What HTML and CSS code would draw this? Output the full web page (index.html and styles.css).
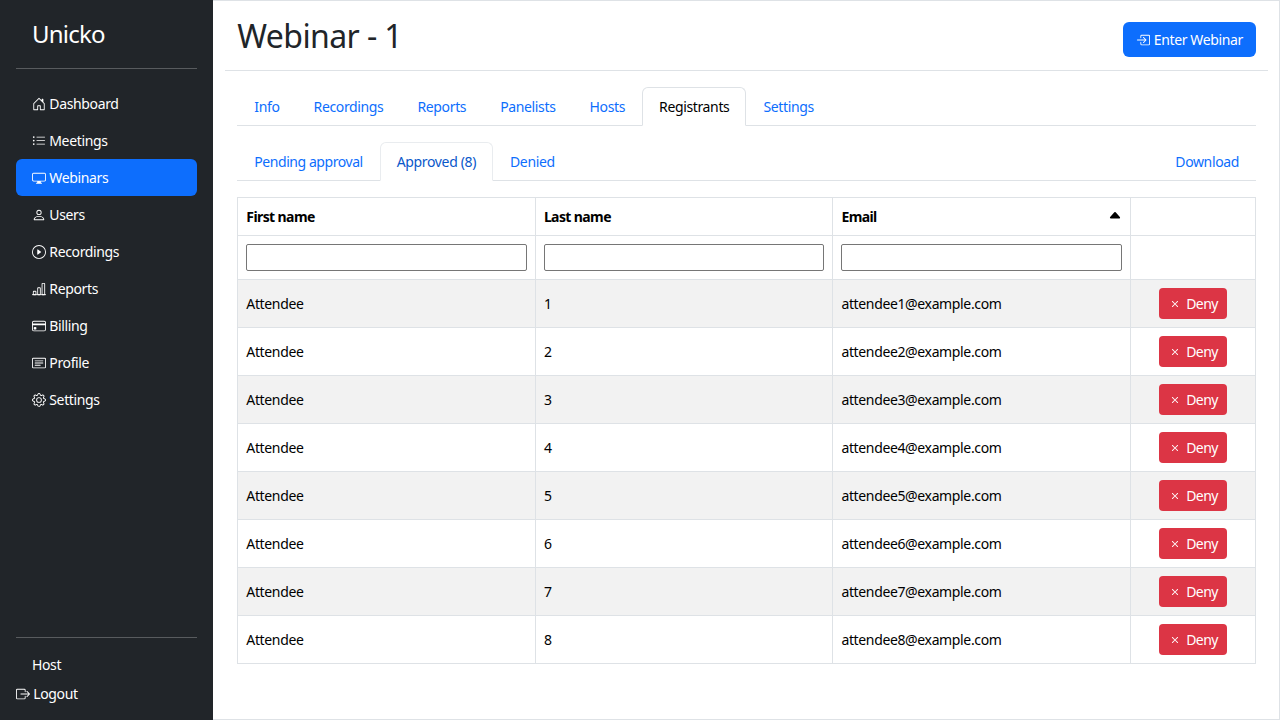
FILE: index.html
```html
<!DOCTYPE html>
<html lang="en">

<head>
    <meta charset="utf-8" />
    <title>Unicko</title>
    <meta name="viewport" content="width=device-width, initial-scale=1">
    <link rel="stylesheet" href="styles.css">
</head>

<body>
    <aside class="sidebar">
        <a class="brand" href="#">Unicko</a>
        <hr>
        <ul class="menu">
            <li><a href="#"><svg class="icon" viewBox="0 0 16 16"><path d="M8.354 1.146a.5.5 0 0 0-.708 0l-6 6A.5.5 0 0 0 1.5 7.5v7a.5.5 0 0 0 .5.5h4.5a.5.5 0 0 0 .5-.5v-4h2v4a.5.5 0 0 0 .5.5H14a.5.5 0 0 0 .5-.5v-7a.5.5 0 0 0-.146-.354L13 5.793V2.5a.5.5 0 0 0-.5-.5h-1a.5.5 0 0 0-.5.5v1.293L8.354 1.146zM2.5 14V7.707l5.5-5.5 5.5 5.5V14H10v-4a.5.5 0 0 0-.5-.5h-3a.5.5 0 0 0-.5.5v4H2.5z"/></svg> Dashboard</a></li>
            <li><a href="#"><svg class="icon" viewBox="0 0 16 16"><path fill-rule="evenodd" d="M5 11.5a.5.5 0 0 1 .5-.5h9a.5.5 0 0 1 0 1h-9a.5.5 0 0 1-.5-.5zm0-4a.5.5 0 0 1 .5-.5h9a.5.5 0 0 1 0 1h-9a.5.5 0 0 1-.5-.5zm0-4a.5.5 0 0 1 .5-.5h9a.5.5 0 0 1 0 1h-9a.5.5 0 0 1-.5-.5zm-3 1a1 1 0 1 0 0-2 1 1 0 0 0 0 2zm0 4a1 1 0 1 0 0-2 1 1 0 0 0 0 2zm0 4a1 1 0 1 0 0-2 1 1 0 0 0 0 2z"/></svg> Meetings</a></li>
            <li><a class="active" href="#"><svg class="icon" viewBox="0 0 16 16"><path d="M0 4s0-2 2-2h12s2 0 2 2v6s0 2-2 2h-4c0 .667.083 1.167.25 1.5H11a.5.5 0 0 1 0 1H5a.5.5 0 0 1 0-1h.75c.167-.333.25-.833.25-1.5H2s-2 0-2-2V4zm1.398-.855a.758.758 0 0 0-.254.302A1.46 1.46 0 0 0 1 4.01V10c0 .325.078.502.145.602.07.105.17.188.302.254a1.464 1.464 0 0 0 .538.143L2.01 11H14c.325 0 .502-.078.602-.145a.758.758 0 0 0 .254-.302 1.464 1.464 0 0 0 .143-.538L15 9.99V4c0-.325-.078-.502-.145-.602a.757.757 0 0 0-.302-.254A1.46 1.46 0 0 0 13.99 3H2c-.325 0-.502.078-.602.145z"/></svg> Webinars</a></li>
            <li><a href="#"><svg class="icon" viewBox="0 0 16 16"><path d="M8 8a3 3 0 1 0 0-6 3 3 0 0 0 0 6zm2-3a2 2 0 1 1-4 0 2 2 0 0 1 4 0zm4 8c0 1-1 1-1 1H3s-1 0-1-1 1-4 6-4 6 3 6 4zm-1-.004c-.001-.246-.154-.986-.832-1.664C11.516 10.68 10.289 10 8 10c-2.29 0-3.516.68-4.168 1.332-.678.678-.83 1.418-.832 1.664h10z"/></svg> Users</a></li>
            <li><a href="#"><svg class="icon" viewBox="0 0 16 16"><path d="M8 15A7 7 0 1 1 8 1a7 7 0 0 1 0 14zm0 1A8 8 0 1 0 8 0a8 8 0 0 0 0 16z"/><path d="M6.271 5.055a.5.5 0 0 1 .52.038l3.5 2.5a.5.5 0 0 1 0 .814l-3.5 2.5A.5.5 0 0 1 6 10.5v-5a.5.5 0 0 1 .271-.445z"/></svg> Recordings</a></li>
            <li><a href="#"><svg class="icon" viewBox="0 0 16 16"><path d="M4 11H2v3h2v-3zm5-4H7v7h2V7zm5-5v12h-2V2h2zm-2-1a1 1 0 0 0-1 1v12a1 1 0 0 0 1 1h2a1 1 0 0 0 1-1V2a1 1 0 0 0-1-1h-2zM6 7a1 1 0 0 1 1-1h2a1 1 0 0 1 1 1v7a1 1 0 0 1-1 1H7a1 1 0 0 1-1-1V7zm-5 4a1 1 0 0 1 1-1h2a1 1 0 0 1 1 1v3a1 1 0 0 1-1 1H2a1 1 0 0 1-1-1v-3z"/><path d="M0 14h16v1H0z"/></svg> Reports</a></li>
            <li><a href="#"><svg class="icon" viewBox="0 0 16 16"><path d="M0 4a2 2 0 0 1 2-2h12a2 2 0 0 1 2 2v8a2 2 0 0 1-2 2H2a2 2 0 0 1-2-2V4zm2-1a1 1 0 0 0-1 1v1h14V4a1 1 0 0 0-1-1H2zm13 4H1v5a1 1 0 0 0 1 1h12a1 1 0 0 0 1-1V7z"/><path d="M2 10a1 1 0 0 1 1-1h1a1 1 0 0 1 1 1v1a1 1 0 0 1-1 1H3a1 1 0 0 1-1-1v-1z"/></svg> Billing</a></li>
            <li><a href="#"><svg class="icon" viewBox="0 0 16 16"><path d="M14.5 3a.5.5 0 0 1 .5.5v9a.5.5 0 0 1-.5.5h-13a.5.5 0 0 1-.5-.5v-9a.5.5 0 0 1 .5-.5h13zm-13-1A1.5 1.5 0 0 0 0 3.5v9A1.5 1.5 0 0 0 1.5 14h13a1.5 1.5 0 0 0 1.5-1.5v-9A1.5 1.5 0 0 0 14.5 2h-13z"/><path d="M3 5.5a.5.5 0 0 1 .5-.5h9a.5.5 0 0 1 0 1h-9a.5.5 0 0 1-.5-.5zM3 8a.5.5 0 0 1 .5-.5h9a.5.5 0 0 1 0 1h-9A.5.5 0 0 1 3 8zm0 2.5a.5.5 0 0 1 .5-.5h6a.5.5 0 0 1 0 1h-6a.5.5 0 0 1-.5-.5z"/></svg> Profile</a></li>
            <li><a href="#"><svg class="icon" viewBox="0 0 16 16"><path d="M8 4.754a3.246 3.246 0 1 0 0 6.492 3.246 3.246 0 0 0 0-6.492zM5.754 8a2.246 2.246 0 1 1 4.492 0 2.246 2.246 0 0 1-4.492 0z"/><path d="M9.796 1.343c-.527-1.79-3.065-1.79-3.592 0l-.094.319a.873.873 0 0 1-1.255.52l-.292-.16c-1.64-.892-3.433.902-2.54 2.541l.159.292a.873.873 0 0 1-.52 1.255l-.319.094c-1.79.527-1.79 3.065 0 3.592l.319.094a.873.873 0 0 1 .52 1.255l-.16.292c-.892 1.64.901 3.434 2.541 2.54l.292-.159a.873.873 0 0 1 1.255.52l.094.319c.527 1.79 3.065 1.79 3.592 0l.094-.319a.873.873 0 0 1 1.255-.52l.292.16c1.64.893 3.434-.902 2.54-2.541l-.159-.292a.873.873 0 0 1 .52-1.255l.319-.094c1.79-.527 1.79-3.065 0-3.592l-.319-.094a.873.873 0 0 1-.52-1.255l.16-.292c.893-1.64-.902-3.433-2.541-2.54l-.292.159a.873.873 0 0 1-1.255-.52l-.094-.319zm-2.633.283c.246-.835 1.428-.835 1.674 0l.094.319a1.873 1.873 0 0 0 2.693 1.115l.291-.16c.764-.415 1.6.42 1.184 1.185l-.159.292a1.873 1.873 0 0 0 1.116 2.692l.318.094c.835.246.835 1.428 0 1.674l-.319.094a1.873 1.873 0 0 0-1.115 2.693l.16.291c.415.764-.42 1.6-1.185 1.184l-.291-.159a1.873 1.873 0 0 0-2.693 1.116l-.094.318c-.246.835-1.428.835-1.674 0l-.094-.319a1.873 1.873 0 0 0-2.692-1.115l-.292.16c-.764.415-1.6-.42-1.184-1.185l.159-.291A1.873 1.873 0 0 0 1.945 8.93l-.319-.094c-.835-.246-.835-1.428 0-1.674l.319-.094A1.873 1.873 0 0 0 3.06 4.377l-.16-.292c-.415-.764.42-1.6 1.185-1.184l.292.159a1.873 1.873 0 0 0 2.692-1.115l.094-.319z"/></svg> Settings</a></li>
        </ul>
        <hr>
        <div class="account">
            <span class="user">Host</span>
            <a href="#"><svg class="icon" viewBox="0 0 16 16"><path fill-rule="evenodd" d="M10 12.5a.5.5 0 0 1-.5.5h-8a.5.5 0 0 1-.5-.5v-9a.5.5 0 0 1 .5-.5h8a.5.5 0 0 1 .5.5v2a.5.5 0 0 0 1 0v-2A1.5 1.5 0 0 0 9.5 2h-8A1.5 1.5 0 0 0 0 3.5v9A1.5 1.5 0 0 0 1.5 14h8a1.5 1.5 0 0 0 1.5-1.5v-2a.5.5 0 0 0-1 0v2z"/><path fill-rule="evenodd" d="M15.854 8.354a.5.5 0 0 0 0-.708l-3-3a.5.5 0 0 0-.708.708L14.293 7.5H5.5a.5.5 0 0 0 0 1h8.793l-2.147 2.146a.5.5 0 0 0 .708.708l3-3z"/></svg> Logout</a>
        </div>
    </aside>

    <main class="content">
        <header class="page-header">
            <h1>Webinar - 1</h1>
            <button type="button" class="btn btn-primary"><svg class="icon" viewBox="0 0 16 16"><path fill-rule="evenodd" d="M6 3.5a.5.5 0 0 1 .5-.5h8a.5.5 0 0 1 .5.5v9a.5.5 0 0 1-.5.5h-8a.5.5 0 0 1-.5-.5v-2a.5.5 0 0 0-1 0v2A1.5 1.5 0 0 0 6.5 14h8a1.5 1.5 0 0 0 1.5-1.5v-9A1.5 1.5 0 0 0 14.5 2h-8A1.5 1.5 0 0 0 5 3.5v2a.5.5 0 0 0 1 0v-2z"/><path fill-rule="evenodd" d="M11.854 8.354a.5.5 0 0 0 0-.708l-3-3a.5.5 0 1 0-.708.708L10.293 7.5H1.5a.5.5 0 0 0 0 1h8.793l-2.147 2.146a.5.5 0 0 0 .708.708l3-3z"/></svg> Enter Webinar</button>
        </header>

        <nav class="tabs">
            <a href="#">Info</a>
            <a href="#">Recordings</a>
            <a href="#">Reports</a>
            <a href="#">Panelists</a>
            <a href="#">Hosts</a>
            <a href="#" class="active">Registrants</a>
            <a href="#">Settings</a>
        </nav>

        <nav class="tabs sub-tabs">
            <a href="#">Pending approval</a>
            <a href="#" class="active">Approved (8)</a>
            <a href="#">Denied</a>
            <a href="#" class="download">Download</a>
        </nav>

        <table class="registrants">
            <colgroup>
                <col><col><col><col class="col-action">
            </colgroup>
            <thead>
                <tr>
                    <th>First name</th>
                    <th>Last name</th>
                    <th><div class="sorted">Email <svg class="icon" viewBox="0 0 16 16"><path d="m7.247 4.86-4.796 5.481c-.566.647-.106 1.659.753 1.659h9.592a1 1 0 0 0 .753-1.659l-4.796-5.48a1 1 0 0 0-1.506 0z"/></svg></div></th>
                    <th></th>
                </tr>
                <tr class="filters">
                    <td><input type="text" name="first_name"></td>
                    <td><input type="text" name="last_name"></td>
                    <td><input type="text" name="email"></td>
                    <td></td>
                </tr>
            </thead>
            <tbody id="rows"></tbody>
        </table>
    </main>
    <script src="script.js"></script>
</body>

</html>
```
FILE: styles.css
```css
* {
  box-sizing: border-box;
}

body {
  display: flex;
  height: 100vh;
  margin: 0;
  font: 14px/1.5 "Noto Sans", sans-serif;
  letter-spacing: -.36px;
  color: #212529;
  background: #fff;
  overflow: hidden;
}

a {
  color: #0d6efd;
  text-decoration: none;
}

.icon {
  width: 1em;
  height: 1em;
  fill: currentColor;
  vertical-align: -.125em;
}

/* sidebar */
.sidebar {
  display: flex;
  flex-direction: column;
  flex: none;
  width: 16.66666667%;
  padding: 16px;
  color: #fff;
  background: #212529;
}

.sidebar a {
  color: #fff;
}

.sidebar hr {
  width: 100%;
  margin: 16px 0;
  border: 0;
  border-top: 1px solid #fff;
  opacity: .25;
}

.sidebar .brand {
  padding-left: 16px;
  font-size: 24px;
  letter-spacing: -.8px;
}

.menu {
  flex: 1;
  margin: 0;
  padding: 0;
  list-style: none;
}

.menu a {
  display: block;
  padding: 8px 16px;
  border-radius: 6px;
}

.menu .active {
  background: #0d6efd;
}

.account {
  display: flex;
  flex-direction: column;
  gap: 8px;
}

.user {
  padding-left: 16px;
}

/* page */
.content {
  flex: 1;
  padding: 0 23px 0 24px;
  border: 1px solid #dee2e6;
  border-left: 0;
}

.page-header {
  display: flex;
  justify-content: space-between;
  align-items: center;
  height: 70px;
  margin: 0 -12px 16px;
  padding: 8px 12px 0;
  border-bottom: 1px solid #dee2e6;
}

h1 {
  margin: 0 0 6px;
  font-size: 32px;
  font-weight: 400;
  line-height: 1.2;
  letter-spacing: -.6px;
}

.btn {
  padding: 6px 12px;
  border: 1px solid transparent;
  border-radius: 6px;
  font: inherit;
  letter-spacing: inherit;
  color: #fff;
}

.btn-primary {
  background: #0d6efd;
}

.btn-danger {
  padding: 4px 8px;
  border-radius: 4px;
  letter-spacing: -.55px;
  background: #dc3545;
}

.btn-danger .icon {
  margin-right: 1px;
}

/* tabs */
.tabs {
  display: flex;
  margin-bottom: 16px;
  border-bottom: 1px solid #dee2e6;
}

.tabs a {
  margin-bottom: -1px;
  padding: 8px 16px;
  border: 1px solid transparent;
  border-radius: 6px 6px 0 0;
}

.tabs .active {
  color: #000;
  background: #fff;
  border-color: #dee2e6 #dee2e6 #fff;
}

.sub-tabs a:first-child {
  letter-spacing: -.44px;
}

.sub-tabs .active {
  color: #0a58ca;
  border-color: #e9ecef #e9ecef #fff;
}

.tabs .download {
  margin-left: auto;
}

/* table */
.registrants {
  width: 100%;
  border-collapse: collapse;
  table-layout: fixed;
  color: #000;
}

.col-action {
  width: 125px;
}

.registrants th,
.registrants td {
  padding: 8px;
  border: 1px solid #dee2e6;
  text-align: left;
}

.registrants th {
  letter-spacing: -.6px;
}

.registrants tr {
  height: 38px;
}

.registrants .filters {
  height: 44px;
}

.registrants tbody tr {
  height: 48px;
}

.registrants tbody tr:nth-child(odd) {
  background: #f2f2f2;
}

.registrants tbody td:last-child {
  padding: 0;
  text-align: center;
}

.registrants input {
  display: block;
  width: 100%;
  height: 27px;
  border: 1px solid #767676;
  border-radius: 2px;
}

.sorted {
  display: flex;
  justify-content: space-between;
}

.sorted .icon {
  margin-top: 2px;
}
```
FILE: script.js
```js
var rows = document.getElementById("rows");

for (var i = 1; i <= 8; i++) {
    var row = rows.insertRow();
    row.innerHTML = '<td>Attendee</td><td>' + i + '</td><td>attendee' + i + '@example.com</td>' +
        '<td><button type="button" class="btn btn-danger"><svg class="icon" viewBox="0 0 16 16">' +
        '<path d="M4.646 4.646a.5.5 0 0 1 .708 0L8 7.293l2.646-2.647a.5.5 0 0 1 .708.708L8.707 8l2.647 2.646a.5.5 0 0 1-.708.708L8 8.707l-2.646 2.647a.5.5 0 0 1-.708-.708L7.293 8 4.646 5.354a.5.5 0 0 1 0-.708z"/>' +
        '</svg> Deny</button></td>';
}
```
